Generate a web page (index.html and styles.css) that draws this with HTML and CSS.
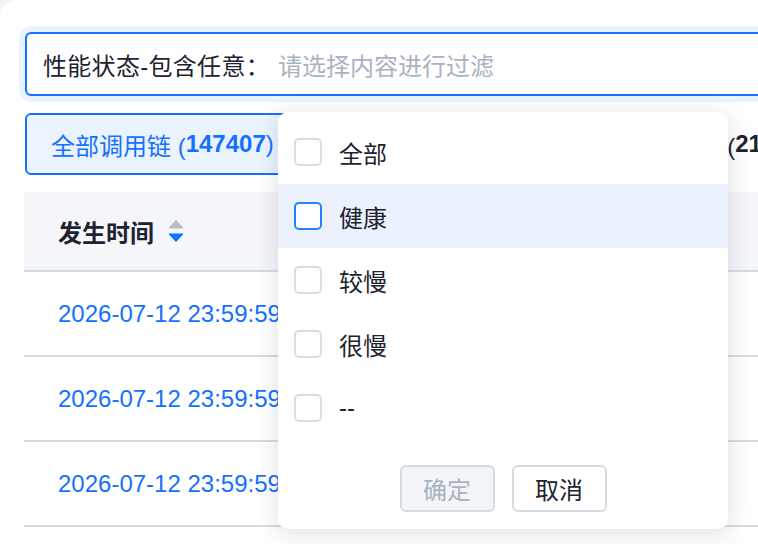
FILE: index.html
```html
<!DOCTYPE html>
<html lang="zh-CN">
<head>
    <meta charset="UTF-8">
    <meta name="viewport" content="width=device-width, initial-scale=1.0">
    <title>调用链</title>
    <link rel="stylesheet" href="styles.css">
</head>
<body>
    <div class="page">
        <div class="filter">
            <span class="filter-label">性能状态-包含任意：</span>
            <span class="filter-placeholder">请选择内容进行过滤</span>
        </div>

        <div class="tabs">
            <div class="tab active">全部调用链 (<b>147407</b>)</div>
            <div class="tab">较慢调用链 (<b>103512</b>)</div>
            <div class="tab">很慢调用链 (<b>21896</b>)</div>
        </div>

        <div class="trace-table">
            <div class="table-head">
                <span>发生时间</span>
                <svg class="sort-icon" width="16" height="22" viewBox="0 0 16 22">
                    <path d="M8 0.5 L15 8 H1 Z" fill="#b5bdc9" stroke="#b5bdc9" stroke-linejoin="round"/>
                    <path d="M1 14 H15 L8 21.5 Z" fill="#1470ff" stroke="#1470ff" stroke-linejoin="round"/>
                </svg>
            </div>
            <div class="table-row"><a class="time-link">2026-07-12 23:59:59</a></div>
            <div class="table-row"><a class="time-link">2026-07-12 23:59:59</a></div>
            <div class="table-row"><a class="time-link">2026-07-12 23:59:59</a></div>
        </div>

        <div class="dropdown">
            <div class="option"><span class="checkbox"></span>全部</div>
            <div class="option hover"><span class="checkbox"></span>健康</div>
            <div class="option"><span class="checkbox"></span>较慢</div>
            <div class="option"><span class="checkbox"></span>很慢</div>
            <div class="option"><span class="checkbox"></span>--</div>
            <div class="dropdown-footer">
                <button class="btn btn-disabled" disabled>确定</button>
                <button class="btn">取消</button>
            </div>
        </div>
    </div>
</body>
</html>
```

FILE: styles.css
```css
body { margin: 0; background: #f4f5f7; font-family: "Liberation Sans", "Noto Sans CJK SC", sans-serif; overflow: hidden; }
.page { position: relative; width: 1000px; height: 544px; box-sizing: border-box; padding: 32px 0 0 24px; background: #fff; border-top-left-radius: 16px; }

.filter { display: flex; align-items: center; height: 64px; box-sizing: border-box; margin-left: 1px; padding: 0 16px; border: 2px solid #1470ff; border-radius: 6px; box-shadow: 0 0 0 6px #ebf3ff; font-size: 24px; }
.filter-label { color: #1d2330; letter-spacing: 0.3px; }
.filter-placeholder { margin-left: 8px; color: #a9b2c0; }

.tabs { display: flex; margin-top: 17px; margin-left: 1px; }
.tab { display: flex; align-items: center; height: 62px; box-sizing: border-box; padding: 0 24px; border: 2px solid transparent; border-radius: 6px; font-size: 24px; color: #1d2330; white-space: nowrap; }
.tab b { font-weight: bold; }
.tab.active { border-color: #1470ff; background: #ebf3ff; color: #1470ff; }

.trace-table { margin-top: 17px; }
.table-head { display: flex; align-items: center; height: 80px; box-sizing: border-box; padding-left: 34px; background: #f5f6fa; border-bottom: 2px solid #d6dae1; font-size: 24px; font-weight: bold; color: #1d2330; }
.sort-icon { margin-left: 14px; }
.table-row { display: flex; align-items: center; height: 85px; box-sizing: border-box; padding-left: 34px; border-bottom: 2px solid #d6dae1; }
.time-link { font-size: 24px; color: #1470ff; white-space: nowrap; }

.dropdown { position: absolute; left: 278px; top: 112px; width: 450px; height: 417px; box-sizing: border-box; padding: 8px 0 17px; background: #fff; border-radius: 10px; box-shadow: 0 4px 24px rgba(20, 30, 50, 0.14); }
.option { display: flex; align-items: center; gap: 17px; height: 64px; padding-left: 16px; font-size: 24px; color: #1d2330; }
.option.hover { background: #ebf2fe; }
.checkbox { width: 28px; height: 28px; box-sizing: border-box; border: 2px solid #d9dde3; border-radius: 5px; background: #fff; }
.option.hover .checkbox { border-color: #2b7fff; }

.dropdown-footer { display: flex; justify-content: center; gap: 17px; margin-top: 25px; }
.btn { width: 95px; height: 47px; padding: 0; border: 2px solid #d6dae1; border-radius: 6px; background: #fff; font: inherit; font-size: 24px; color: #1d2330; cursor: pointer; }
.btn-disabled { background: #f3f5f9; color: #a9b2c0; cursor: not-allowed; }
```
